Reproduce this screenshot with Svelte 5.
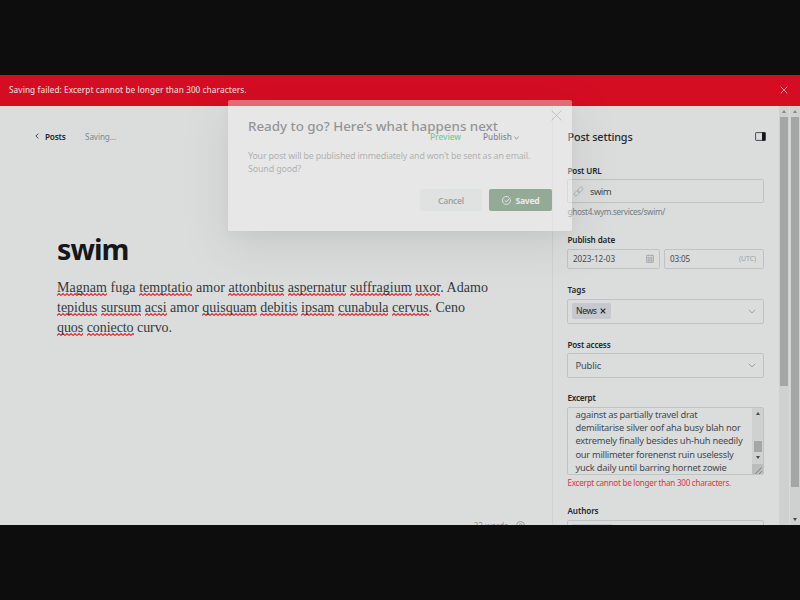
<script>
  // Spreads a line of text over a fixed measure by adjusting its letter spacing.
  function fit(node, width) {
    node.style.letterSpacing = '0px';
    const natural = node.getBoundingClientRect().width;
    const count = node.textContent.length;
    node.style.letterSpacing = (width - natural) / count + 'px';
  }

  const paragraph = [
    { width: 431, parts: [['Magnam', 1], [' fuga ', 0], ['temptatio', 1], [' amor ', 0], ['attonbitus', 1], [' ', 0], ['aspernatur', 1], [' ', 0], ['suffragium', 1], [' ', 0], ['uxor', 1], ['. Adamo', 0]] },
    { width: 408, parts: [['tepidus', 1], [' ', 0], ['sursum', 1], [' ', 0], ['acsi', 1], [' amor ', 0], ['quisquam', 1], [' ', 0], ['debitis', 1], [' ', 0], ['ipsam', 1], [' ', 0], ['cunabula', 1], [' ', 0], ['cervus', 1], ['. Ceno', 0]] },
    { width: 115, parts: [['quos', 1], [' ', 0], ['coniecto', 1], [' curvo.', 0]] }
  ];

  const excerpt = [
    ['against as partially travel drat', 122],
    ['demilitarise silver oof aha busy blah nor', 165],
    ['extremely finally besides uh-huh needily', 167],
    ['our millimeter forenenst ruin uselessly', 158],
    ['yuck daily until barring hornet zowie', 151]
  ];
</script>

<div class="stage">
  <div class="screen">
    <div class="alert">
      <span use:fit={237.5}>Saving failed: Excerpt cannot be longer than 300 characters.</span>
      <svg width="8" height="8" viewBox="0 0 8 8"><path d="M.7.7l6.6 6.6M7.3.7L.7 7.3" /></svg>
    </div>

    <div class="workspace">
      <main>
        <header>
          <svg class="back" width="4" height="6" viewBox="0 0 4 6"><path d="M3.3.6L.9 3l2.4 2.4" /></svg>
          <span class="posts" use:fit={20.5}>Posts</span>
          <span class="saving" use:fit={31}>Saving...</span>
          <span class="preview" use:fit={31}>Preview</span>
          <span class="publish" use:fit={29}>Publish</span>
          <svg class="down" width="5" height="4" viewBox="0 0 5 4"><path d="M.4.9l2.1 2L4.6.9" /></svg>
        </header>
        <h1><span use:fit={71.5}>swim</span></h1>
        <div class="copy">
          {#each paragraph as line}
            <div><span use:fit={line.width}>{#each line.parts as [text, marked]}{#if marked}<u>{text}</u>{:else}{text}{/if}{/each}</span></div>
          {/each}
        </div>
        <footer>
          <span>32 words</span>
          <svg width="9" height="9" viewBox="0 0 9 9"><circle cx="4.5" cy="4.5" r="4" /><path d="M3 3.5q1.5-1.5 3 0L4.5 5" /></svg>
        </footer>
      </main>

      <aside>
        <div class="heading">
          <span use:fit={65}>Post settings</span>
          <svg width="11" height="9" viewBox="0 0 11 9"><rect x=".6" y=".6" width="9.6" height="7.8" rx=".5" fill="none" stroke="#3a3d40" stroke-width=".9" /><path d="M7 .3h3.5v8.4H7z" fill="#15171a" /></svg>
        </div>

        <div class="label url-label"><span use:fit={34}>Post URL</span></div>
        <div class="field url">
          <svg width="9" height="9" viewBox="0 0 9 9"><g transform="rotate(-45 4.5 4.5)"><rect x="-.9" y="2.8" width="6" height="3.4" rx="1.7" /><rect x="3.9" y="2.8" width="6" height="3.4" rx="1.7" /></g></svg>
          <span use:fit={21}>swim</span>
        </div>
        <div class="hint"><span use:fit={97.5}>ghost4.wym.services/swim/</span></div>

        <div class="label date-label"><span use:fit={47.5}>Publish date</span></div>
        <div class="dates">
          <div class="field date">
            <span use:fit={42}>2023-12-03</span>
            <svg width="8" height="9" viewBox="0 0 8 9"><path d="M.5 1.5h7v7h-7zM.5 3.3h7M2.8 3.3v5.2M5.2 3.3v5.2M.5 5h7M.5 6.8h7M2.2.2v1.6M5.8.2v1.6" /></svg>
          </div>
          <div class="field time"><span use:fit={20}>03:05</span><small use:fit={17}>(UTC)</small></div>
        </div>

        <div class="label tags-label"><span use:fit={18}>Tags</span></div>
        <div class="field tags">
          <div class="tag"><span use:fit={20.5}>News</span><svg width="6" height="6" viewBox="0 0 6 6"><path d="M.7.7l4.6 4.6M5.3.7L.7 5.3" /></svg></div>
          <svg class="chev" width="8" height="5" viewBox="0 0 8 5"><path d="M.8.7L4 4 7.2.7" /></svg>
        </div>

        <div class="label access-label"><span use:fit={43}>Post access</span></div>
        <div class="field access">
          <span use:fit={25.5}>Public</span>
          <svg class="chev" width="8" height="5" viewBox="0 0 8 5"><path d="M.8.7L4 4 7.2.7" /></svg>
        </div>

        <div class="label excerpt-label"><span use:fit={28}>Excerpt</span></div>
        <div class="field textarea">
          <div class="lines">
            {#each excerpt as [text, width]}
              <div><span use:fit={width}>{text}</span></div>
            {/each}
          </div>
          <div class="mini">
            <i class="up"></i>
            <b></b>
            <i class="dn"></i>
            <svg width="10" height="10" viewBox="0 0 10 10"><path d="M3 9L9 3M6.5 9L9 6.5" /></svg>
          </div>
        </div>
        <div class="error"><span use:fit={163.5}>Excerpt cannot be longer than 300 characters.</span></div>

        <div class="label authors-label"><span use:fit={31}>Authors</span></div>
        <div class="field authors"><div class="author"></div></div>
      </aside>

      <div class="bar inner"><i class="up"></i><b></b></div>
      <div class="bar outer"><i class="up"></i><b></b><i class="dn"></i></div>
    </div>

    <div class="modal">
      <svg class="close" width="11" height="11" viewBox="0 0 11 11"><path d="M.6.6l9.8 9.8M10.4.6L.6 10.4" /></svg>
      <h2><span use:fit={250}>Ready to go? Here’s what happens next</span></h2>
      <p><span use:fit={282}>Your post will be published immediately and won't be sent as an email.</span></p>
      <p><span use:fit={53}>Sound good?</span></p>
      <div class="actions">
        <div class="button cancel"><span use:fit={26}>Cancel</span></div>
        <div class="button saved">
          <svg width="9" height="9" viewBox="0 0 9 9"><path d="M8.3 3.4A4 4 0 1 1 6.8 1.2M2.7 4.3l1.6 1.6L8.2 1.7" /></svg>
          <span use:fit={24}>Saved</span>
        </div>
      </div>
    </div>
  </div>
</div>

<style>
  :global(body) { margin: 0; background: #0d0d0d; }
  .stage { width: 800px; height: 600px; box-sizing: border-box; padding: 75px 0; background: #0d0d0d; }
  .screen {
    position: relative; width: 800px; height: 450px; overflow: hidden; background: #dbdddc;
    font-family: "Noto Sans", "Open Sans", sans-serif; font-size: 8px; color: #3c4146;
    white-space: nowrap;
  }
  .screen * { box-sizing: border-box; }
  svg { display: block; flex: none; fill: none; stroke: currentColor; overflow: visible; }
  .alert {
    height: 31px; padding: 0 12px 1px 9px; display: flex; align-items: center;
    justify-content: space-between; background: #d40d23; color: #f2d3d4; font-size: 8.2px;
    font-weight: 500;
  }
  .alert span { margin-top: -1px; }
  .alert svg { stroke: #eeb0b5; stroke-width: .9; }
  .workspace { display: flex; height: 419px; }
  main { width: 553px; border-right: 1px solid #cfd1d1; display: flex; flex-direction: column; }
  header { height: 20px; margin-top: 20px; padding-left: 35px; display: flex; align-items: center; font-size: 8.2px; }
  header > * { flex: none; }
  .back { stroke: #333; stroke-width: .9; }
  .posts { margin-left: 6px; color: #23272b; font-weight: 600; }
  .saving { margin-left: 19.5px; color: #7e8890; }
  .preview { margin-left: 314px; color: #18a64a; font-weight: 500; }
  .publish { margin-left: 22px; color: #33383c; font-weight: 500; }
  .down { margin-left: 2px; margin-top: 3px; stroke: #333; stroke-width: .9; }
  h1 { margin: 82px 0 0 57px; height: 41px; line-height: 41px; font-size: 28.6px; font-weight: 700; color: #15171a; }
  .copy { margin: 9px 0 0 57px; line-height: 20px; font-family: "Liberation Serif", serif; font-size: 14px; color: #34383c; }
  .copy div { height: 20px; }
  u {
    padding-bottom: 1px; text-decoration: none;
    background: url("data:image/svg+xml,%3Csvg xmlns='http://www.w3.org/2000/svg' width='4' height='3'%3E%3Cpath d='M-1 1.5L0 2.4L2 .6L4 2.4L5 1.5' fill='none' stroke='%23de2028' stroke-width='1.1'/%3E%3C/svg%3E") 0 100% / 4px 3px repeat-x;
  }
  footer { margin: auto 27px 0 0; height: 4px; display: flex; justify-content: flex-end; gap: 8px; color: #8c9499; line-height: 10px; font-size: 8px; }
  footer svg { stroke-width: .8; }
  aside { width: 226px; padding: 0 15px 0 14px; }
  .heading { height: 20px; margin-top: 20px; display: flex; justify-content: space-between; align-items: center; margin-right: -2px; font-size: 10.8px; font-weight: 500; color: #25292d; }
  .heading span { margin-left: .5px; }
  .heading svg { stroke: none; }
  .label { height: 12px; line-height: 12px; padding-left: .5px; font-size: 8.1px; font-weight: 600; color: #23272b; }
  .url-label { margin-top: 19px; }
  .field { width: 197px; border: 1px solid #c0c3c4; border-radius: 2px; display: flex; align-items: center; color: #44494e; }
  .url { height: 24px; margin-top: 2px; padding-left: 6px; font-size: 9.5px; gap: 7px; }
  .url svg { stroke: #a8adaf; stroke-width: .8; }
  .hint { height: 12px; line-height: 12px; margin-top: 3px; padding-left: .5px; font-size: 8.2px; color: #747c83; }
  .date-label { margin-top: 16px; }
  .dates { display: flex; gap: 4px; margin-top: 3px; }
  .dates .field { height: 20px; justify-content: space-between; padding: 0 5px 1px; font-size: 8.1px; }
  .date { width: 93px; }
  .date svg { stroke: #9da2a6; stroke-width: .7; }
  .dates .time { width: 100px; padding-right: 7px; }
  small { font-size: 7px; color: #9ba1a5; }
  .tags-label { margin-top: 15px; }
  .tags { height: 25px; margin-top: 3px; padding: 0 7px 1px 4px; justify-content: space-between; }
  .tag { height: 16px; width: 39px; padding-left: 4px; display: flex; align-items: center; gap: 3px; background: #c5c9cd; border-radius: 2px; font-size: 8.7px; color: #23272b; }
  .tag svg { stroke-width: 1.1; }
  .chev { stroke: #969c9f; stroke-width: .9; }
  .access-label { margin-top: 15px; }
  .access { height: 25px; margin-top: 2px; padding: 0 7px 0 7.5px; justify-content: space-between; font-size: 9.4px; }
  .excerpt-label { margin-top: 14px; }
  .textarea { height: 68px; margin-top: 3px; align-items: stretch; justify-content: space-between; overflow: hidden; padding-left: 7.5px; }
  .lines { font-size: 9.3px; line-height: 13.2px; width: 176px; }
  .lines div { height: 13.2px; }
  .mini { width: 11px; flex: none; background: #cfd1d1; display: flex; flex-direction: column; align-items: center; padding-top: 4px; }
  i { flex: none; width: 0; height: 0; border-left: 2.5px solid transparent; border-right: 2.5px solid transparent; }
  .up { border-bottom: 3px solid #454748; }
  .dn { border-top: 3px solid #454748; }
  .mini b { flex: none; width: 8px; height: 11px; margin-top: 26px; background: #a5a7a7; }
  .mini .dn { margin-top: 4px; }
  .mini svg { margin-top: 5px; width: 11px; height: 11px; background: #bbbdbd; stroke: #6c6e6f; stroke-width: .7; }
  .error { height: 12px; line-height: 12px; margin-top: 2px; padding-left: .5px; font-size: 8.1px; color: #da3549; }
  .authors-label { margin-top: 16px; }
  .authors { height: 25px; margin-top: 3px; padding-left: 4px; align-items: flex-start; }
  .author { width: 40px; height: 16px; margin-top: 3px; background: #c5c9cd; }
  .bar { background: #cfd0d0; display: flex; flex-direction: column; align-items: center; padding-top: 4px; }
  .bar .up { border-bottom-color: #858787; }
  .bar b { flex: none; width: 8px; margin-top: 4px; background: #a4a6a6; }
  .inner { width: 10px; }
  .inner b { height: 269px; }
  .outer { width: 11px; border-left: 1px solid #d9dada; }
  .outer b { height: 370px; }
  .outer .dn { margin-top: 31px; }
  .modal {
    position: absolute; left: 228px; top: 25px; width: 344px; height: 131px; opacity: .4;
    padding: 16px 20px; background: #faf8f8; border-radius: 2px;
    box-shadow: 0 3px 8px rgba(0, 0, 0, .08), 0 14px 44px rgba(0, 0, 0, .22);
  }
  .close { position: absolute; right: 10px; top: 10px; stroke: #85898b; stroke-width: .8; }
  h2 { margin: 0; height: 20px; line-height: 20px; font-size: 13.4px; font-weight: 500; color: #25292c; }
  p { margin: 0; height: 13px; line-height: 13px; font-size: 8.9px; color: #6c7072; }
  h2 + p { margin-top: 13px; }
  .actions { display: flex; justify-content: flex-end; gap: 7px; margin-top: 14px; }
  .button { height: 22px; display: flex; align-items: center; justify-content: center; border-radius: 2px; font-size: 8.6px; font-weight: 600; }
  .button span { margin-top: 1px; }
  .cancel { width: 62px; background: #e7eaea; color: #484c50; }
  .saved { width: 63px; gap: 5px; background: #29602f; color: #fff; font-weight: 700; }
  .saved svg { stroke-width: .9; }
</style>
